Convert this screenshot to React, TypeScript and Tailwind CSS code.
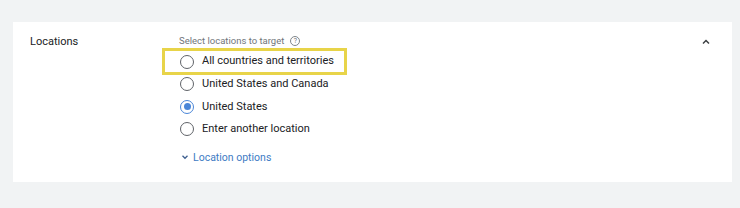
import React, { useState } from "react";

const options = [
  "All countries and territories",
  "United States and Canada",
  "United States",
  "Enter another location",
];

const Radio: React.FC<{ checked: boolean }> = ({ checked }) => (
  <span
    className={`flex h-[14px] w-[14px] shrink-0 items-center justify-center rounded-full border-[1.5px] ${
      checked ? "border-[#4a86d8]" : "border-[#5f6368]"
    }`}
  >
    {checked && <span className="h-[7px] w-[7px] rounded-full bg-[#4a86d8]" />}
  </span>
);

export default function App() {
  const [selected, setSelected] = useState(2);

  return (
    <div
      className="h-[208px] w-[740px] bg-[#f1f3f4] pl-[13px] pr-[8px] pt-[22px]"
      style={{ fontFamily: "Roboto, 'Liberation Sans', sans-serif" }}
    >
      <div className="flex h-[160px] bg-white">
        <div className="w-[149px] pl-[17px] pt-[12px] text-[11px] text-[#202124]">
          Locations
        </div>
        <div className="flex-1 pt-[13px]">
          <div className="flex items-center gap-[6px] pl-[17px] text-[9.5px] leading-[12px] text-[#70757a]">
            Select locations to target
            <span className="flex h-[10px] w-[10px] items-center justify-center rounded-full border border-[#80868b] text-[7px] leading-none">
              ?
            </span>
          </div>
          <div className="mt-[1px] flex flex-col">
            {options.map((label, i) => (
              <button
                key={label}
                onClick={() => setSelected(i)}
                className={`flex items-center gap-[8px] text-left text-[11px] text-[#202124] ${
                  i === 0
                    ? "mb-[-2px] h-[27px] w-[185px] border-[3px] border-[#e8d449] pl-[15px]"
                    : "h-[22.5px] pl-[18px]"
                }`}
              >
                <Radio checked={selected === i} />
                {label}
              </button>
            ))}
          </div>
          <button className="ml-[18px] mt-[9px] flex items-center gap-[3px] text-[10.5px] text-[#3e7bc4]">
            <svg width="10" height="10" viewBox="0 0 24 24" fill="none" stroke="#3d5f8f" strokeWidth="3">
              <path d="M6 9l6 6 6-6" />
            </svg>
            Location options
          </button>
        </div>
        <div className="pr-[20px] pt-[14px]">
          <svg width="12" height="12" viewBox="0 0 24 24" fill="none" stroke="#3c4043" strokeWidth="3">
            <path d="M6 15l6-6 6 6" />
          </svg>
        </div>
      </div>
    </div>
  );
}
